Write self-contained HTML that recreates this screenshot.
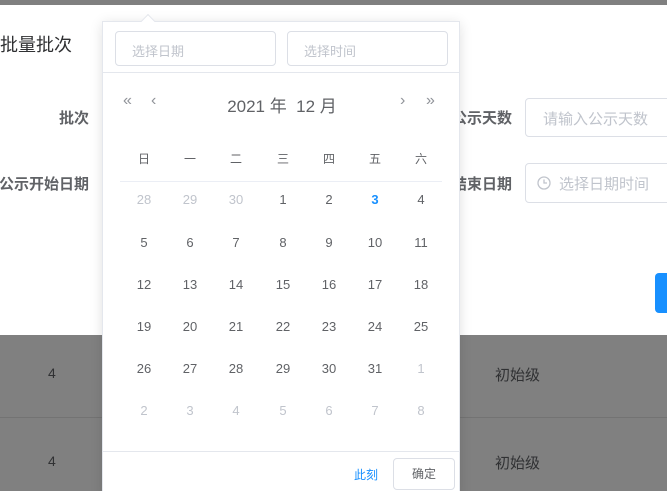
<!DOCTYPE html>
<html><head><meta charset="utf-8"><style>
*{margin:0;padding:0;box-sizing:border-box}
html,body{width:667px;height:491px;overflow:hidden}
body{background:#808080;font-family:"Liberation Sans","Noto Sans CJK SC",sans-serif;position:relative}
.a{position:absolute;white-space:nowrap}
.modal{position:absolute;left:0;top:5px;width:667px;height:330px;background:#fff}
.lbl{font-size:15px;font-weight:bold;color:#606266}
.inp{position:absolute;border:1px solid #dcdfe6;border-radius:4px;background:#fff;color:#c0c4cc;font-size:15px}
.pk{position:absolute;left:102px;top:21px;width:358px;height:475px;background:#fff;border:1px solid #e4e7ed;box-shadow:0 2px 12px rgba(0,0,0,.12)}
.d{position:absolute;width:40px;text-align:center;font-size:13px;color:#606266;transform:translateX(-20px)}
.g{color:#c0c4cc}
</style></head><body>
<div class="modal">
<div class="a" style="left:0;top:26px;font-size:18px;color:#303133">批量批次</div>
<div class="a lbl" style="right:578px;top:102px">批次</div>
<div class="a lbl" style="right:578px;top:168px">公示开始日期</div>
<div class="a lbl" style="right:155px;top:102px">公示天数</div>
<div class="a lbl" style="right:155px;top:168px">结束日期</div>
<div class="inp" style="left:525px;top:93px;width:160px;height:39px;padding:9px 0 0 17px">请输入公示天数</div>
<div class="inp" style="left:525px;top:158px;width:160px;height:40px;padding:9px 0 0 33px">选择日期时间
<svg style="position:absolute;left:11px;top:12px" width="14" height="14" viewBox="0 0 14 14"><circle cx="7" cy="7" r="6" fill="none" stroke="#c0c4cc" stroke-width="1.3"/><path d="M7 3.5V7h3" fill="none" stroke="#c0c4cc" stroke-width="1.3"/></svg></div>
<div class="a" style="left:655px;top:268px;width:20px;height:40px;background:#1890ff;border-radius:4px"></div>
</div>
<div class="a" style="left:0;top:417px;width:667px;height:1px;background:#737373"></div>
<div class="a" style="left:48px;top:365px;font-size:14px;color:#303133">4</div>
<div class="a" style="left:48px;top:453px;font-size:14px;color:#303133">4</div>
<div class="a" style="left:495px;top:364px;font-size:15px;color:#303133">初始级</div>
<div class="a" style="left:495px;top:452px;font-size:15px;color:#303133">初始级</div>
<div class="pk">
<div class="a" style="left:40px;top:-6px;width:10px;height:10px;background:#fff;border-left:1px solid #e4e7ed;border-top:1px solid #e4e7ed;transform:rotate(45deg)"></div>
<div class="inp" style="left:12px;top:9px;width:161px;height:35px;font-size:13px;padding:9px 0 0 16px">选择日期</div>
<div class="inp" style="left:184px;top:9px;width:161px;height:35px;font-size:13px;padding:9px 0 0 16px">选择时间</div>
<div class="a" style="left:0;top:50px;width:356px;height:1px;background:#e4e7ed"></div>
<div class="a" style="left:20px;top:70px;font-size:16px;color:#909399">«</div>
<div class="a" style="left:48px;top:70px;font-size:16px;color:#909399">‹</div>
<div class="a" style="left:297px;top:70px;font-size:16px;color:#909399">›</div>
<div class="a" style="left:323px;top:70px;font-size:16px;color:#909399">»</div>
<div class="a" style="left:0;width:356px;text-align:center;top:70px;font-size:17px;color:#606266;padding-left:2px">2021 年&nbsp; 12 月</div>
<div class="a" style="left:17px;top:159px;width:322px;height:1px;background:#ebeef5"></div>
<div id="cal"></div>
<div class="a" style="left:0;top:429px;width:356px;height:1px;background:#e4e7ed"></div>
<div class="a" style="left:251px;top:444px;font-size:12px;color:#1890ff">此刻</div>
<div class="a" style="left:290px;top:436px;width:62px;height:32px;border:1px solid #dcdfe6;border-radius:4px;font-size:12px;color:#606266;text-align:center;line-height:30px">确定</div>
</div>
<script>
var c=[41,87,133,180,226,272,318],w="日一二三四五六",h="";
for(var i=0;i<7;i++)h+='<div class="d" style="font-size:12px;left:'+c[i]+'px;top:128px">'+w[i]+'</div>';
var days=[[28,1],[29,1],[30,1]];for(var d=1;d<=31;d++)days.push([d,0]);for(d=1;d<=8;d++)days.push([d,1]);
var ys=[170,213,255,297,339,381];
for(i=0;i<42;i++){var s=days[i][1]?' g':'';var st=(days[i][0]==3&&!days[i][1])?'color:#1890ff;font-weight:bold;':'';h+='<div class="d'+s+'" style="'+st+'left:'+c[i%7]+'px;top:'+ys[Math.floor(i/7)]+'px">'+days[i][0]+'</div>';}
document.getElementById('cal').innerHTML=h;
</script>
</body></html>
